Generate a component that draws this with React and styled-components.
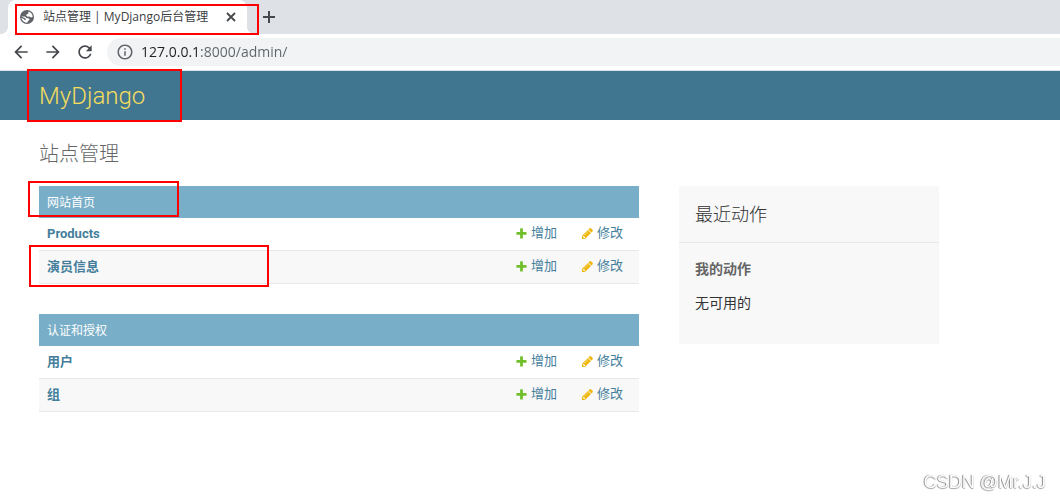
import React from 'react'
import styled, { createGlobalStyle } from 'styled-components'
import {
    MdArrowBack,
    MdArrowForward,
    MdRefresh,
    MdInfoOutline
} from 'react-icons/md'

const color = {
    strip: '#dee1e6',
    chrome: '#5f6368',
    primary: '#417690',
    secondary: '#79aec8',
    link: '#447e9b',
    accent: '#f5dd5d',
    darkened: '#f8f8f8',
    hairline: '#e8e8e8'
}

const font = {
    ui: '"Open Sans", "Noto Sans CJK SC", sans-serif',
    admin: 'Roboto, "Noto Sans CJK SC", sans-serif'
}

const apps = [
    { name: '网站首页', marked: true, models: [{ name: 'Products' }, { name: '演员信息', marked: true }] },
    { name: '认证和授权', models: [{ name: '用户' }, { name: '组' }] }
]

export default function App() {
    return (
        <>
            <GlobalStyle />
            <TabStrip>
                <Tab>
                    <GlobeIcon />
                    <TabTitle>站点管理 | MyDjango后台管理</TabTitle>
                    <IconButton aria-label="关闭">
                        <CloseIcon />
                    </IconButton>
                    <Mark $top={4} $left={7} $width={244} $height={31} />
                </Tab>
                <IconButton aria-label="新标签页">
                    <NewTabIcon />
                </IconButton>
            </TabStrip>
            <Toolbar>
                <IconButton aria-label="后退">
                    <MdArrowBack size={20} />
                </IconButton>
                <IconButton aria-label="前进">
                    <MdArrowForward size={20} />
                </IconButton>
                <IconButton aria-label="重新加载">
                    <MdRefresh size={20} stroke="currentColor" />
                </IconButton>
                <AddressBar>
                    <MdInfoOutline size={18} color={color.chrome} />
                    <AddressInput aria-label="地址" defaultValue="127.0.0.1:8000/admin/" />
                </AddressBar>
            </Toolbar>
            <Header>
                <SiteName href="#">MyDjango</SiteName>
                <Mark $top={-2} $left={27} $width={155} $height={53} />
            </Header>
            <Content>
                <PageTitle>站点管理</PageTitle>
                <Columns>
                    <main>
                        {apps.map(app => (
                            <AppModule key={app.name} app={app} />
                        ))}
                    </main>
                    <RecentActions />
                </Columns>
            </Content>
            <Watermark>CSDN @Mr.J.J</Watermark>
        </>
    )
}

function AppModule({ app }) {
    return (
        <Module>
            {app.marked && <Mark $top={-5} $left={-11} $width={151} $height={36} />}
            <Caption>
                <a href="#">{app.name}</a>
            </Caption>
            <tbody>
                {app.models.map(model => (
                    <ModelRow key={model.name}>
                        <ModelName scope="row">
                            <a href="#">{model.name}</a>
                            {model.marked && (
                                <Mark $top={-6} $left={-10} $width={240} $height={42} />
                            )}
                        </ModelName>
                        <ActionCell>
                            <ActionLink href="#">
                                <AddIcon />
                                增加
                            </ActionLink>
                        </ActionCell>
                        <ActionCell>
                            <ActionLink href="#">
                                <ChangeIcon />
                                修改
                            </ActionLink>
                        </ActionCell>
                    </ModelRow>
                ))}
            </tbody>
        </Module>
    )
}

function RecentActions() {
    return (
        <Sidebar>
            <SidebarTitle>最近动作</SidebarTitle>
            <SidebarBody>
                <SidebarHeading>我的动作</SidebarHeading>
                <SidebarText>无可用的</SidebarText>
            </SidebarBody>
        </Sidebar>
    )
}

function GlobeIcon() {
    return (
        <svg width="16" height="16" viewBox="0 0 16 16">
            <circle cx="8" cy="8" r="7" fill={color.chrome} />
            <path
                fill="#fff"
                d="M9.6 2.6c2.4.7 4.1 2.800 4.100 5.400l-1.700.4-1.500-.9-1.700.3-1.500-1.100.2-1.400 1.600-.4.2-1zM2.300 7.400l3.400.1 1.900 1.400 2.400.5.500 1.500-1.500 1-.4 1.700c-3 .4-5.800-1.600-6.300-4.500l2.100.6 1.600 1.500 1.100-.9-1.400-1.300z"
            />
        </svg>
    )
}

function CloseIcon() {
    return (
        <svg width="14" height="14" viewBox="0 0 14 14" stroke="currentColor" strokeWidth="1.8">
            <path d="M3 3l8 8M11 3l-8 8" />
        </svg>
    )
}

function NewTabIcon() {
    return (
        <svg width="20" height="20" viewBox="0 0 20 20" stroke="currentColor" strokeWidth="2">
            <path d="M4 10h12M10 4v12" />
        </svg>
    )
}

function AddIcon() {
    return (
        <svg width="13" height="13" viewBox="0 0 1792 1792" fill="#70bf2b">
            <path d="M1600 796v192q0 40-28 68t-68 28h-416v416q0 40-28 68t-68 28h-192q-40 0-68-28t-28-68v-416h-416q-40 0-68-28t-28-68v-192q0-40 28-68t68-28h416v-416q0-40 28-68t68-28h192q40 0 68 28t28 68v416h416q40 0 68 28t28 68z" />
        </svg>
    )
}

function ChangeIcon() {
    return (
        <svg width="13" height="13" viewBox="0 0 1792 1792" fill="#efb80b">
            <path d="M491 1536l91-91-235-235-91 91v107h128v128h107zm523-928q0-22-22-22-10 0-17 7l-542 542q-7 7-7 17 0 22 22 22 10 0 17-7l542-542q7-7 7-17zm-54-192l416 416-832 832h-416v-416zm683 96q0 53-37 90l-166 166-416-416 166-165q36-38 90-38 53 0 91 38l235 234q37 39 37 91z" />
        </svg>
    )
}

const GlobalStyle = createGlobalStyle`
    * {
        box-sizing: border-box;
    }
    body {
        margin: 0;
        background: #fff;
        color: #333;
        font-family: ${font.admin};
        font-size: 14px;
    }
    a {
        color: inherit;
        text-decoration: none;
    }
`

const Mark = styled.span`
    position: absolute;
    top: ${props => props.$top}px;
    left: ${props => props.$left}px;
    width: ${props => props.$width}px;
    height: ${props => props.$height}px;
    border: 2px solid #f00;
    pointer-events: none;
    z-index: 1;
`

const TabStrip = styled.div`
    display: flex;
    align-items: center;
    gap: 12px;
    height: 34px;
    padding-left: 8px;
    background: ${color.strip};
`

const Tab = styled.div`
    position: relative;
    display: flex;
    align-items: center;
    width: 239px;
    height: 34px;
    padding: 0 9px 0 11px;
    border-radius: 8px 8px 0 0;
    background: #fff;

    &::before,
    &::after {
        content: '';
        position: absolute;
        bottom: 0;
        width: 8px;
        height: 8px;
    }
    &::before {
        left: -8px;
        background: radial-gradient(circle at 0 0, transparent 8px, #fff 8px);
    }
    &::after {
        right: -8px;
        background: radial-gradient(circle at 100% 0, transparent 8px, #fff 8px);
    }
`

const TabTitle = styled.span`
    flex: 1;
    padding-left: 8px;
    color: #3c4043;
    font-family: ${font.ui};
    font-size: 12px;
    line-height: 16px;
    white-space: nowrap;
`

const IconButton = styled.button`
    display: flex;
    padding: 0;
    border: 0;
    background: none;
    color: #45484c;
    cursor: pointer;
`

const Toolbar = styled.div`
    display: flex;
    align-items: center;
    gap: 12px;
    height: 37px;
    padding-left: 11px;
    border-bottom: 1px solid ${color.strip};
    background: #fff;
`

const AddressBar = styled.div`
    display: flex;
    flex: 1;
    align-items: center;
    gap: 7px;
    height: 28px;
    padding-left: 9px;
    border-radius: 14px 0 0 14px;
    background: #f1f3f4;
`

const AddressInput = styled.input`
    flex: 1;
    padding: 0;
    border: 0;
    outline: 0;
    background: linear-gradient(90deg, #202124 60px, ${color.chrome} 60px);
    background-clip: text;
    color: transparent;
    font-family: ${font.ui};
    font-size: 14px;
    line-height: 20px;
`

const Header = styled.header`
    position: relative;
    padding: 11px 39px 10px;
    background: ${color.primary};
`

const SiteName = styled.a`
    display: block;
    color: ${color.accent};
    font-size: 24px;
    font-weight: 300;
    line-height: 28px;
`

const Content = styled.div`
    padding: 20px 39px;
`

const PageTitle = styled.h1`
    margin: 0 0 18px;
    color: #666;
    font-size: 20px;
    font-weight: 300;
    line-height: 28px;
`

const Columns = styled.div`
    display: grid;
    grid-template-columns: minmax(0, 600px) 260px;
    align-items: start;
    gap: 40px;
`

const Module = styled.table`
    position: relative;
    width: 100%;
    margin-bottom: 30px;
    border-collapse: separate;
    border-spacing: 0;
`

const Caption = styled.caption`
    padding: 9px 8px 7px;
    background: ${color.secondary};
    color: #fff;
    font-size: 12px;
    line-height: 16px;
    text-align: left;
`

const ModelRow = styled.tr`
    color: ${color.link};
    font-size: 13px;
    line-height: 16px;

    &:nth-child(even) {
        background: ${color.darkened};
    }
    th,
    td {
        border-bottom: 1px solid ${color.hairline};
    }
`

const ModelName = styled.th`
    position: relative;
    padding: 8px;
    font-weight: 700;
    text-align: left;
`

const ActionCell = styled.td`
    width: 66px;
    padding: 7px 8px 9px;
`

const ActionLink = styled.a`
    display: flex;
    align-items: center;
    gap: 3px;
    white-space: nowrap;
`

const Sidebar = styled.aside`
    background: ${color.darkened};
`

const SidebarTitle = styled.h2`
    margin: 0;
    padding: 17px 16px 15px;
    border-bottom: 1px solid ${color.hairline};
    font-size: 18px;
    font-weight: 300;
    line-height: 24px;
`

const SidebarBody = styled.div`
    padding: 16px 16px 31px;
`

const SidebarHeading = styled.h3`
    margin: 0 0 14px;
    color: #666;
    font-size: 14px;
    font-weight: 700;
    line-height: 20px;
`

const SidebarText = styled.p`
    margin: 0;
    line-height: 20px;
`

const Watermark = styled.span`
    position: fixed;
    right: 14px;
    bottom: 5px;
    color: #fff;
    font-family: 'Liberation Sans', sans-serif;
    font-size: 18px;
    line-height: 24px;
    text-shadow: -1px 0 1px #888, 0 1px 1px #aaa;
`
